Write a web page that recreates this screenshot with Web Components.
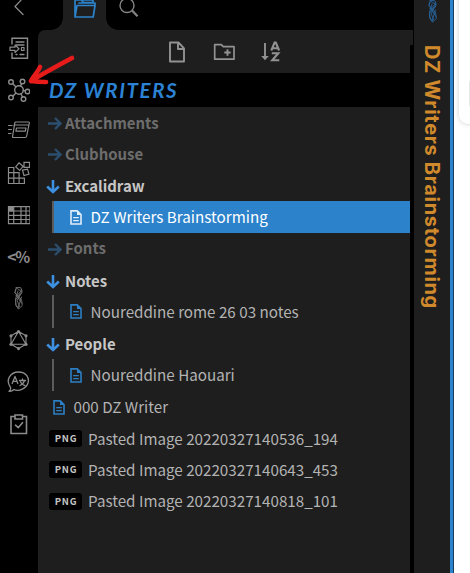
<!DOCTYPE html>
<html lang="en"><head><meta charset="utf-8"><title>DZ Writers</title>
<style>
html,body{margin:0;height:573px;overflow:hidden;background:#000}
</style></head><body>
<vault-window></vault-window>
<script>
const svg=(w,h,body,vb)=>`<svg width="${w}" height="${h}" viewBox="${vb||`0 0 ${w} ${h}`}" fill="none" stroke="currentColor" stroke-linejoin="round" stroke-linecap="round">${body}</svg>`;
const scribble='<path stroke-width=".9" d="M10 1.500h4.500l1.500 3.500-6.500 9 .3 5.500 2.700 3.500 3.800-3.500-.8-6-6.500-7 1.500-4.500 4.500 3-4.500 5 5.500 7.500M9.500 3l-.5 4 3.500 3.500 3.500-3.500-.5-4M12 5l-2.500 8 .5 6 3 3.500M15 8l-4 6 2.500 6.500M15.500 11l-3.500 11M9.500 9l5 5"/>';
const ICONS={
 back:svg(24,24,'<path stroke-width="1.2" d="M17 3l-8 8.500 8 8"/>'),
 enter:svg(24,24,'<path stroke-width="1.4" stroke-linejoin="miter" d="M6 8V2.300h15.500v20H6V17"/><path stroke-width="1.3" d="M10 6h8M10 9h8M14 18.500h4M10 18.500h1"/><path stroke-width="1.2" d="M4 11.200h5V9l4 3.800-4 3.800v-2.200H4zM15.500 11.500h2.500v3h-2.500z"/>'),
 graph:svg(24,24,'<g stroke-width="1.4"><circle cx="13" cy="12" r="4.300"/><circle cx="5" cy="4" r="2.300"/><circle cx="16.500" cy="3.500" r="2.300"/><circle cx="21.500" cy="13.500" r="2.300"/><circle cx="17.500" cy="21" r="2.300"/><circle cx="5" cy="19.500" r="2.300"/><path d="M6.700 5.700l3.200 3M15.600 5.800l-1.200 2.200M17.300 12.500l1.700.4M15 16l1.500 3M7 18l3-3"/></g>'),
 cards:svg(24,24,'<g stroke-width="1.2"><path d="M8 7.500l.8-3.700q.2-.8 1-.8h12.700q1 0 .8 1L20.700 17q-.3 1.500-1.700 1.500H7.500q-1.200 0-1-1L8.500 6h13.500M10.500 9h9.500l-.6 3.200H9.900zM2.500 6.500h3.500M2.500 10.500h3M2.500 14.500h2.500"/></g>'),
 blocks:svg(24,24,'<g stroke-width="1.2" stroke-linejoin="miter"><path d="M2.500 6.500h5.300v16H2.500zM7.800 11.700h5.300v10.800H7.800zM13.100 17.200h5.300v5.300h-5.300zM2.500 11.700h5.300M2.500 17.200h11M18 1.300h5.500v5H18zM13 1.800l4 3.500-3.300 4.200-4-3.500zM16.500 9.200l5-1 1.500 5-5 1.300z"/></g>'),
 table:svg(24,24,'<path fill="currentColor" stroke="none" d="M2.500 3.500h5v5h-5z"/><path stroke-width="1.2" stroke-linejoin="miter" d="M2.500 3.700H24v17H2.500zM2.500 8H24M2.500 12.300H24M2.500 16.500H24M7.700 3.700v17M15 3.700v17M20 3.700v17"/>'),
 scribble:svg(24,24,scribble),
 hex:svg(24,24,'<path stroke-width="1.1" d="M12.500 3.500l7.500 4.300v8.500l-7.500 4.300L5 16.300V7.800zM12.500 3.500L5 16.300h15z"/><g fill="currentColor" stroke="none"><circle cx="12.500" cy="3.500" r="1.600"/><circle cx="20" cy="7.800" r="1.600"/><circle cx="20" cy="16.300" r="1.600"/><circle cx="12.500" cy="20.600" r="1.600"/><circle cx="5" cy="16.300" r="1.600"/><circle cx="5" cy="7.800" r="1.600"/></g>'),
 translate:svg(24,24,'<path stroke-width="1.300" d="M4.500 17.500C-1 10 4.500 2 12.500 2s11 6 9.500 11-9 9-14 6.500c-1.500 1.500-3 2-5 1.800 1.500-1 2-2 1.500-3.800z"/><path stroke-width="1.300" d="M6.200 13.500l2.800-7 2.800 7M7.200 11.300h3.600M13.500 10.500h6M16.500 9v1.500M18.500 10.700c-1 3-2.500 4-4.500 4.800M14.500 12c1 2 2.500 3 4.500 3.700"/>'),
 clip:svg(24,24,'<g stroke-width="1.600" stroke-linejoin="miter"><path d="M9 4.500H5v17h15.500v-17H16.500M9 3h7.500v4H9zM9.500 13.200l2.700 2.500 4.300-5"/></g>'),
 folderopen:svg(24,26,'<g stroke-width="1.700"><path d="M3 22V4.500h6l2.500 3H20M3 22L5 10.500h18L21.200 22zM7 8h16v3M4 5h17v3"/></g>'),
 search:svg(24,26,'<circle cx="9" cy="10.500" r="7" stroke-width="1.400"/><path stroke-width="2.200" stroke-linecap="butt" d="M14.100 15.600l5.400 5.600"/>'),
 newnote:svg(24,24,'<path stroke-width="1.900" d="M5 2.500h8.500l5.500 5.800V21.500H5zM13 3v6h6"/>'),
 newfolder:svg(24,24,'<path stroke-width="1.700" d="M2.700 4.700h6.600l2 2H22v12.500H2.700z"/><path stroke-width="1.900" stroke-linecap="butt" d="M15.500 9.300v6.400M12.300 12.500h6.400"/>'),
 sort:svg(24,24,'<path stroke-width="1.900" stroke-linecap="butt" d="M6 3v14"/><path fill="currentColor" stroke="none" d="M2.200 16h7.600L6 20.300z"/><path stroke-width="2.100" stroke-linecap="butt" stroke-linejoin="miter" d="M12.300 10.500l3.300-8h1.200l3.300 8M13.500 8.300h5.500M12.800 13.300h6.500l-6 7h7"/>'),
 right:svg(14,13,'<path stroke-width="2.400" stroke-linecap="butt" stroke-linejoin="miter" d="M0 6.500h12M7 1l5.500 5.500L7 12"/>'),
 down:svg(14,14,'<path stroke-width="2.600" stroke-linecap="butt" stroke-linejoin="miter" d="M7 0v12M1.200 6.500L7 12 12.800 6.500"/>'),
 file:svg(12,15,'<path stroke-width="1.600" stroke-linejoin="miter" d="M1 .9h6.200L11 4.700V14H1z"/><path fill="currentColor" stroke="none" d="M7 1l4 4H7z"/><path stroke-width="1.300" stroke-linecap="butt" d="M3.200 7.700h5.600M3.200 10.700h5.600"/>')
};
class UiIcon extends HTMLElement{
 connectedCallback(){this.attachShadow({mode:'open'}).innerHTML=`<style>:host{display:block;flex:none}svg{display:block}</style>${ICONS[this.getAttribute('name')]}`}
}
customElements.define('ui-icon',UiIcon);

class RibbonRail extends HTMLElement{
 connectedCallback(){this.attachShadow({mode:'open'}).innerHTML=`<style>
 :host{display:flex;flex-direction:column;align-items:center;gap:17.750px;width:38px;height:573px;box-sizing:border-box;padding-right:1.500px;background:#000;color:#8c8c8c;overflow:hidden}
 .back{margin:-5px 0 -1px}
 .code{height:24px;font:700 15.500px/22px "Noto Sans CJK SC","Noto Sans",sans-serif;letter-spacing:-1px;white-space:nowrap}
 .thin{opacity:.8}
 </style><ui-icon class="back" name="back"></ui-icon>
 ${['enter','graph','cards','blocks','table'].map(n=>`<ui-icon name="${n}"></ui-icon>`).join('')}
 <div class="code">&lt;%</div><ui-icon class="thin" name="scribble"></ui-icon>
 ${['hex','translate','clip'].map(n=>`<ui-icon name="${n}"></ui-icon>`).join('')}`}
}
customElements.define('ribbon-rail',RibbonRail);

class TabStrip extends HTMLElement{
 connectedCallback(){this.attachShadow({mode:'open'}).innerHTML=`<style>
 :host{display:flex;height:30px;background:#000}
 .gap{width:25px;display:flex}
 .tab{width:43px;background:#1e1e1e;color:#2c82cb;display:flex;justify-content:center}
 .tab ui-icon{margin:-5px 2px 0 0}
 .search{color:#858585;margin:-5px 0 0 0}
 .corner{width:12px;height:12px;align-self:flex-end;margin-left:auto;background:radial-gradient(circle at 0 0,#000 11.500px,#1e1e1e 12px)}
 .corner.r{margin:0;background:radial-gradient(circle at 12px 0,#000 11.500px,#1e1e1e 12px)}
 </style><div class="gap"><div class="corner"></div></div><div class="tab"><ui-icon name="folderopen"></ui-icon></div><div class="corner r"></div><ui-icon class="search" name="search"></ui-icon>`}
}
customElements.define('tab-strip',TabStrip);

class TreeRow extends HTMLElement{
 connectedCallback(){
  const k=this.getAttribute('kind'),h=this.getAttribute('h');
  const lead={closed:'<ui-icon name="right"></ui-icon>',open:'<ui-icon name="down"></ui-icon>',child:'<ui-icon name="file"></ui-icon>',active:'<ui-icon name="file"></ui-icon>',file:'<ui-icon name="file"></ui-icon>',png:'<span class="tag">PNG</span>'}[k];
  this.attachShadow({mode:'open'}).innerHTML=`<style>
 :host{display:flex;height:${h}px;box-sizing:border-box;align-items:center;font:400 15.200px/24px "Noto Sans CJK SC","Noto Sans",sans-serif;color:#b3b3b3;white-space:nowrap}
 ui-icon{color:#2c7fc5}
 .t{margin-top:-1px}
 :host([kind=closed]){padding-left:10px;gap:3px;font-weight:700;font-size:14.950px;color:#6d6d6d}
 :host([kind=closed]) ui-icon{color:#2b4f6e}
 :host([kind=open]){padding-left:8px;gap:5px;font-weight:700;font-size:14.950px;color:#c6c6c6}
 :host([kind=open]) ui-icon{color:#3d8fdf;margin-top:3px}
 :host([kind=open]) .t{margin-top:1px}
 :host([kind=child]),:host([kind=active]){margin-left:14px;padding-left:16px;gap:8.500px;border-left:2px solid #5c5c5c}
 :host([kind=active]){background:#2c82cb;background-clip:padding-box;color:#fff}
 :host([kind=active]) ui-icon{color:#e2eefa}
 :host([h="32"]) .t{margin-top:-2px}
 :host([kind=file]){padding-left:15px;gap:8.500px}
 :host([kind=png]){padding-left:11px;gap:6px}
 .tag{width:33px;height:17px;border-radius:3px;background:#000;color:#c4c4c4;font:700 9.500px/16.500px "Noto Sans CJK SC","Noto Sans",sans-serif;letter-spacing:.8px;text-align:center;text-indent:1px}
 </style>${lead}<span class="t"><slot></slot></span>`}
}
customElements.define('tree-row',TreeRow);

class FileExplorer extends HTMLElement{
 connectedCallback(){this.attachShadow({mode:'open'}).innerHTML=`<style>
 :host{display:flex;flex-direction:column;width:376px;height:573px;background:#000}
 .tools{width:375px;height:43px;display:flex;background:linear-gradient(#1e1e1e,#1e1e1e) 0 0/375px 15px no-repeat,linear-gradient(#1e1e1e,#1e1e1e) 0 0/372px 43px no-repeat;border-top-left-radius:7px;color:#929292;box-sizing:border-box;padding:9.500px 0 0 126.500px;gap:23px}
 .vault{height:34px;padding-left:11px;font:italic 700 20.500px/34px Lato,sans-serif;color:#2c82d4;letter-spacing:1.600px;white-space:nowrap}
 .tree{width:372px;flex:1;background:#1e1e1e;padding-top:1px}
 </style><tab-strip></tab-strip>
 <div class="tools"><ui-icon name="newnote"></ui-icon><ui-icon name="newfolder"></ui-icon><ui-icon name="sort"></ui-icon></div>
 <div class="vault">DZ WRITERS</div>
 <div class="tree">
 <tree-row kind="closed" h="31">Attachments</tree-row><tree-row kind="closed" h="31">Clubhouse</tree-row>
 <tree-row kind="open" h="31">Excalidraw</tree-row><tree-row kind="active" h="32">DZ Writers Brainstorming</tree-row>
 <tree-row kind="closed" h="32">Fonts</tree-row><tree-row kind="open" h="30">Notes</tree-row>
 <tree-row kind="child" h="33">Noureddine rome 26 03 notes</tree-row><tree-row kind="open" h="31">People</tree-row>
 <tree-row kind="child" h="32">Noureddine Haouari</tree-row><tree-row kind="file" h="32">000 DZ Writer</tree-row>
 <tree-row kind="png" h="31">Pasted Image 20220327140536_194</tree-row><tree-row kind="png" h="31">Pasted Image 20220327140643_453</tree-row><tree-row kind="png" h="32">Pasted Image 20220327140818_101</tree-row>
 </div>`}
}
customElements.define('file-explorer',FileExplorer);

class PaneHeader extends HTMLElement{
 connectedCallback(){this.attachShadow({mode:'open'}).innerHTML=`<style>
 :host{display:flex;flex-direction:column;align-items:center;width:36px;height:573px;background:#1e1e1e;border-right:3px solid #2c82cb;overflow:hidden}
 ui-icon{color:#27639a;margin:-1px 0 22px}
 .t{writing-mode:vertical-rl;font:700 20px/36px Inter,sans-serif;letter-spacing:.680px;color:#d08a2c;white-space:nowrap}
 </style><ui-icon name="scribble"></ui-icon><div class="t"><slot></slot></div>`}
}
customElements.define('pane-header',PaneHeader);

class CanvasPane extends HTMLElement{
 connectedCallback(){this.attachShadow({mode:'open'}).innerHTML=`<style>
 :host{display:block;flex:1;height:573px;background:#fff;border-left:1px solid #173d60;box-sizing:border-box;overflow:hidden}
 .card{margin:-10px 0 0 5px;width:60px;height:134px;border-radius:9px;background:#fff;box-shadow:0 0 5px #0003;padding:88px 0 0 10px;box-sizing:border-box}
 .btn{width:40px;height:31px;border-radius:5px;background:#e7e7e9}
 </style><div class="card"><div class="btn"></div></div>`}
}
customElements.define('canvas-pane',CanvasPane);

class VaultWindow extends HTMLElement{
 connectedCallback(){this.attachShadow({mode:'open'}).innerHTML=`<style>
 :host{display:flex;position:relative;width:470px;height:573px;background:#000;overflow:hidden}
 .mark{position:absolute;left:26px;top:52px}
 </style><ribbon-rail></ribbon-rail><file-explorer></file-explorer><pane-header>DZ Writers Brainstorming</pane-header><canvas-pane></canvas-pane>
 <svg class="mark" width="52" height="36" fill="none" stroke="#e81b1b" stroke-width="4.600" stroke-linecap="round" stroke-linejoin="round"><path d="M46 6C31 14 18 21 5 29M14 15C12 20 8 23 5 29M5 29c6 1 11 1 15 1"/></svg>`}
}
customElements.define('vault-window',VaultWindow);
</script></body></html>
